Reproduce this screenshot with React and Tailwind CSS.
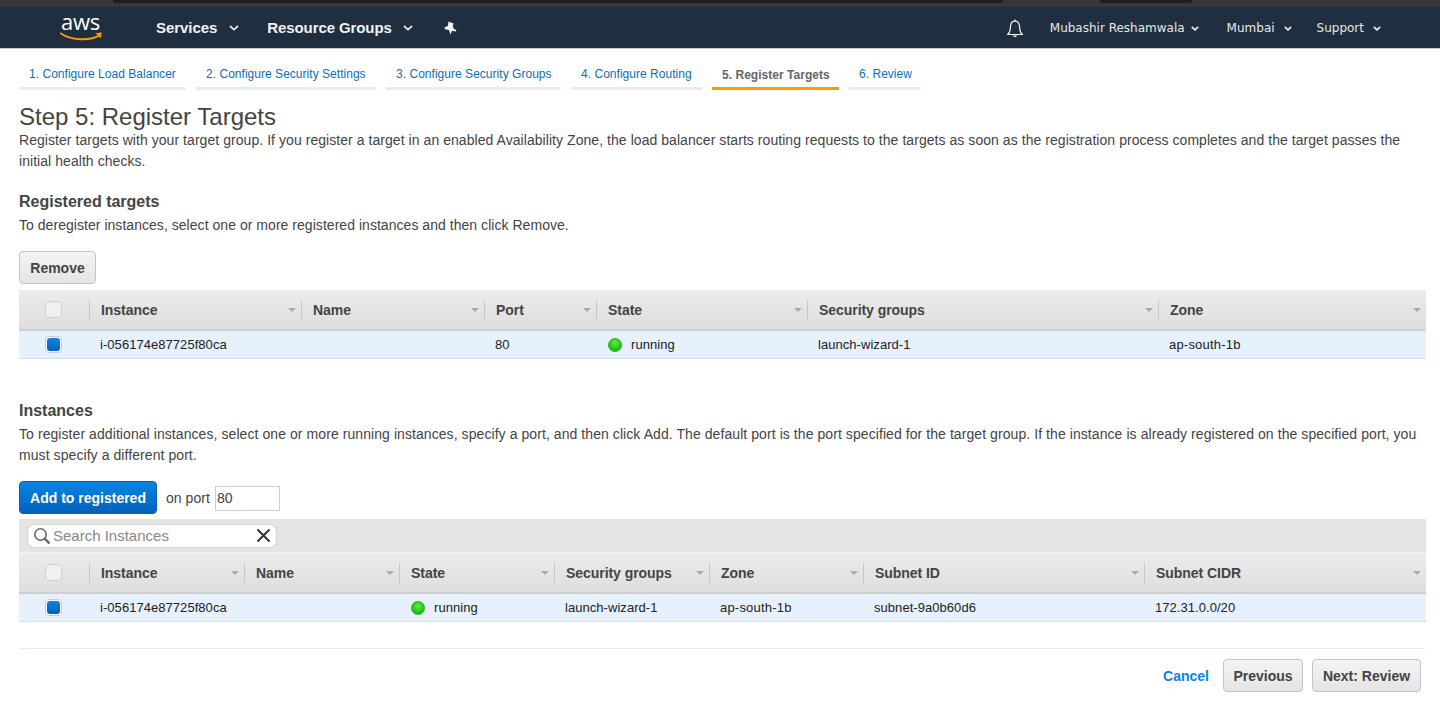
import React from "react";

const sans = "font-['Liberation_Sans',Arial,sans-serif]";

function Chevron({ className = "" }) {
  return (
    <svg width="10" height="6" viewBox="0 0 10 6" className={className} fill="none" stroke="currentColor" strokeWidth="1.7">
      <path d="M1 1l4 3.600L9 1" />
    </svg>
  );
}

function SmallCaret({ className = "" }) {
  return (
    <svg width="8" height="5" viewBox="0 0 8 5" className={className} fill="none" stroke="currentColor" strokeWidth="1.8">
      <path d="M.8.800 4 3.800 7.200.800" />
    </svg>
  );
}

function Bell() {
  return (
    <svg width="18" height="19" viewBox="0 0 18 19" fill="none" stroke="#f2f2f2" strokeWidth="1.2">
      <path d="M1.500 15.500c1.600-1.400 2.400-2.600 2.600-4.400l.4-4C4.800 4.200 6.600 2.200 9 2.200s4.200 2 4.500 4.900l.4 4c.2 1.800 1 3 2.600 4.400z" strokeLinejoin="round" />
      <path d="M9 .6v1.600" />
      <path d="M7 16.600c.3 1 1 1.500 2 1.500s1.700-.5 2-1.500z" fill="#f2f2f2" stroke="none" />
    </svg>
  );
}

function Pin() {
  return (
    <svg width="13" height="14" viewBox="0 0 13 14" fill="#f6f6f6">
      <path d="M4.500.5 10 2.700 8.700 4.200 9.500 7.600 12.500 9.200 11.500 10.500 8 9.800 6.500 13.500 5 9 1 8.200.5 6.400 4 4.700z" />
    </svg>
  );
}

function Logo() {
  return (
    <div className="relative w-[44px] h-[30px]">
      <span className="absolute left-[1px] top-[-5px] text-[22px] leading-[24px] tracking-[-0.2px] text-white font-['Open_Sans',sans-serif]">aws</span>
      <svg className="absolute left-0 top-[17px]" width="44" height="11" viewBox="0 0 44 11" fill="none">
        <path d="M1 2.500C10 8.800 29 10.800 40 4.200" stroke="#f90" strokeWidth="2" strokeLinecap="round" />
        <path d="M35.500 2.300 41.700 1.300 41 7.200z" fill="#f90" />
      </svg>
    </div>
  );
}

function TopNav() {
  return (
    <div className="h-[49px] bg-[#1f2f3f] flex flex-col">
      <div className="h-[7px] bg-[#37373b] flex">
        <div className="ml-[113px] w-[890px] h-[3px] rounded-b-[8px] bg-[#1e1e20]" />
        <div className="ml-[97px] w-[92px] h-[3px] rounded-b-[8px] bg-[#1e1e20]" />
      </div>
      <div className="flex-1 flex items-center pt-[1px] border-b border-[#c4c8cc] text-white">
        <div className="ml-[60px] mt-[1px]"><Logo /></div>
        <span className={`ml-[52px] text-[15px] tracking-[-0.05px] font-bold text-[#f2f2f2] ${sans}`}>Services</span>
        <Chevron className="ml-[12px] text-[#e8e8e8]" />
        <span className={`ml-[28px] text-[15px] tracking-[-0.1px] font-bold text-[#f2f2f2] ${sans}`}>Resource Groups</span>
        <Chevron className="ml-[11px] text-[#e8e8e8]" />
        <div className="ml-[31px] flex mt-[-1px]"><Pin /></div>
        <div className="ml-auto flex items-center text-[#e8e8e8] font-['DejaVu_Sans',sans-serif]">
          <Bell />
          <span className="ml-[26px] text-[12px]">Mubashir Reshamwala</span>
          <SmallCaret className="ml-[6px]" />
          <span className="ml-[28px] text-[12px]">Mumbai</span>
          <SmallCaret className="ml-[9px]" />
          <span className="ml-[25px] text-[12px]">Support</span>
          <SmallCaret className="ml-[9px] mr-[59px]" />
        </div>
      </div>
    </div>
  );
}

const tabs = [
  ["1. Configure Load Balancer", "w-[167px]"],
  ["2. Configure Security Settings", "w-[180px]"],
  ["3. Configure Security Groups", "w-[175px]"],
  ["4. Configure Routing", "w-[131px]"],
  ["5. Register Targets", "w-[127px]"],
  ["6. Review", "w-[72px]"],
];

function Tabs() {
  return (
    <div className="flex gap-[10px] mt-[16px]">
      {tabs.map(([t, w], i) => (
        <div
          key={t}
          className={`${w} h-[25px] pl-[10px] text-[12px] tracking-[0.03px] leading-[18px] border-b-[3px] ${
            i === 4 ? "border-[#ff9900] text-[#666] font-bold pt-[1px]" : "border-[#eaeded] text-[#0b6fb8]"
          }`}
        >
          {t}
        </div>
      ))}
    </div>
  );
}

function GrayButton({ children, className = "" }) {
  return (
    <button className={`h-[33px] pt-[1px] rounded-[4px] border border-[#c4c4c4] bg-gradient-to-b from-[#f4f4f4] to-[#e4e4e4] text-[14px] font-bold text-[#444] ${className}`}>
      {children}
    </button>
  );
}

function Checkbox({ checked }) {
  return (
    <div className={`w-[17px] h-[17px] rounded-[4px] border flex items-center justify-center ${checked ? "border-[#c8ccd0] bg-white" : "border-[#d0d0d0] bg-[#f0f0f0]"}`}>
      {checked && <div className="w-[13px] h-[13px] rounded-[3px] bg-gradient-to-b from-[#1583e0] to-[#0062bd]" />}
    </div>
  );
}

function Caret() {
  return <div className="w-0 h-0 border-x-[4px] border-x-transparent border-t-[4px] border-t-[#aaa]" />;
}

function Running() {
  return (
    <span className="flex items-center gap-[9px] ml-[1px]">
      <span className="w-[14px] h-[14px] rounded-full bg-[radial-gradient(circle_at_50%_35%,#5cf040,#12bb10_75%)] border border-[#2cb02a]" />
      running
    </span>
  );
}

function Zone() {
  return <span className="tracking-[0.2px]">ap-south-1b</span>;
}

function DataTable({ cols, cells }) {
  const tpl = { gridTemplateColumns: `70px ${cols.map((c) => c.w + "px").join(" ")}` };
  return (
    <div>
      <div className="grid h-[41px] bg-gradient-to-b from-[#ececec] to-[#dedede] border-b-2 border-[#cfcfcf]" style={tpl}>
        <div className="flex items-center pl-[26px]"><Checkbox /></div>
        {cols.map((c) => (
          <div key={c.name} className="flex items-center">
            <div className="w-px h-[20px] bg-[#c8c8c8] shrink-0" />
            <span className="ml-[11px] pt-[1px] text-[14px] tracking-[-0.05px] font-bold text-[#444]">{c.name}</span>
            <span className="ml-auto mr-[5px]"><Caret /></span>
          </div>
        ))}
      </div>
      <div className="grid h-[28px] bg-[#e6f1fd] border-b border-[#d5dde6] text-[13px] tracking-[0.05px] text-[#222]" style={tpl}>
        <div className="flex items-center pl-[26px]"><Checkbox checked /></div>
        {cells.map((c, i) => (
          <div key={i} className="flex items-center pl-[11px]">{c}</div>
        ))}
      </div>
    </div>
  );
}

function SearchIcon() {
  return (
    <svg width="18" height="18" viewBox="0 0 18 18" fill="none" stroke="#666" strokeWidth="1.600">
      <circle cx="7.500" cy="7.500" r="5.700" />
      <path d="M11.700 11.700 16.500 16.500" strokeWidth="2.400" />
    </svg>
  );
}

export default function App() {
  return (
    <div className={`w-[1440px] h-[708px] overflow-hidden bg-white text-[#444] ${sans}`}>
      <TopNav />
      <div className="pl-[19px] pr-[14px]">
        <Tabs />
        <h1 className="mt-[13px] text-[24px] leading-[28px] font-normal text-[#444]">Step 5: Register Targets</h1>
        <p className="mt-[-1px] text-[14px] tracking-[0.055px] leading-[21px] text-[#444]">
          Register targets with your target group. If you register a target in an enabled Availability Zone, the load balancer starts routing requests to the targets as soon as the registration process completes and the target passes the initial health checks.
        </p>
        <h2 className="mt-[20px] text-[16px] leading-[20px] font-bold text-[#444]">Registered targets</h2>
        <p className="mt-[3px] text-[14px] tracking-[0.04px] leading-[21px]">To deregister instances, select one or more registered instances and then click Remove.</p>
        <GrayButton className="mt-[15px] w-[77px] block">Remove</GrayButton>
        <div className="mt-[6px]">
          <DataTable
            cols={[
              { name: "Instance", w: 212 },
              { name: "Name", w: 183 },
              { name: "Port", w: 112 },
              { name: "State", w: 211 },
              { name: "Security groups", w: 351 },
              { name: "Zone", w: 268 },
            ]}
            cells={["i-056174e87725f80ca", "", "80", <Running />, "launch-wizard-1", <Zone />]}
          />
        </div>
        <h2 className="mt-[42px] text-[16px] leading-[20px] font-bold text-[#444]">Instances</h2>
        <p className="mt-[3px] text-[14px] tracking-[0.073px] leading-[21px]">
          To register additional instances, select one or more running instances, specify a port, and then click Add. The default port is the port specified for the target group. If the instance is already registered on the specified port, you must specify a different port.
        </p>
        <div className="mt-[15px] flex items-center">
          <button className="h-[33px] w-[138px] pt-[1px] rounded-[4px] border border-[#0b5fae] bg-gradient-to-b from-[#0a86e2] to-[#0062bd] text-[14px] font-bold text-white">Add to registered</button>
          <span className="ml-[9px] mt-[1px] text-[14px] tracking-[0.04px]">on port</span>
          <div className="ml-[5px] mt-[1px] w-[65px] h-[25px] border border-[#ccc] flex items-center pl-[1px] text-[14px] text-[#444]">80</div>
        </div>
        <div className="mt-[5px] h-[34px] bg-[#e4e4e4] border-b border-[#f4f4f4] flex items-center pl-[8px]">
          <div className="w-[250px] h-[24px] rounded-[8px] bg-white border border-[#d4d4d4] flex items-center pl-[5px] pr-[5px]">
            <SearchIcon />
            <span className="ml-[2px] pt-[1px] text-[15px] text-[#888]">Search Instances</span>
            <svg className="ml-auto" width="15" height="15" viewBox="0 0 15 15" stroke="#333" strokeWidth="2"><path d="M1.500 1.500 13.500 13.500M13.500 1.500 1.500 13.500" /></svg>
          </div>
        </div>
        <DataTable
          cols={[
            { name: "Instance", w: 155 },
            { name: "Name", w: 155 },
            { name: "State", w: 155 },
            { name: "Security groups", w: 155 },
            { name: "Zone", w: 154 },
            { name: "Subnet ID", w: 281 },
            { name: "Subnet CIDR", w: 282 },
          ]}
          cells={["i-056174e87725f80ca", "", <Running />, "launch-wizard-1", <Zone />, "subnet-9a0b60d6", "172.31.0.0/20"]}
        />
        <div className="mt-[26px] border-t border-[#eaeded] pt-[10px] flex items-center justify-end pr-[5px]">
          <span className="pt-[1px] text-[14px] font-bold text-[#0a84e0]">Cancel</span>
          <GrayButton className="ml-[14px] w-[80px]">Previous</GrayButton>
          <GrayButton className="ml-[9px] w-[109px]">Next: Review</GrayButton>
        </div>
      </div>
    </div>
  );
}
